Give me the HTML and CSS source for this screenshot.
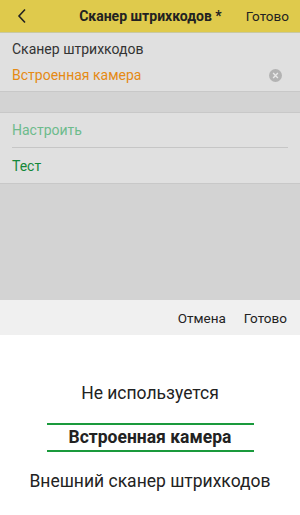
FILE: index.html
```html
<!DOCTYPE html>
<html lang="ru">
<head>
<meta charset="utf-8">
<link rel="stylesheet" href="styles.css">
</head>
<body>
<div class="screen">
  <header class="topbar">
    <span class="back">
      <svg width="10" height="16" viewBox="0 0 10 16"><path d="M8 1.5 L2 8 L8 14.5" fill="none" stroke="#222" stroke-width="1.6"/></svg>
    </span>
    <span class="title">Сканер штрихкодов *</span>
    <span class="done">Готово</span>
  </header>
  <section class="group first">
    <div class="label">Сканер штрихкодов</div>
    <div class="value-row">
      <span class="value">Встроенная камера</span>
      <span class="clear">
        <svg width="13" height="13" viewBox="0 0 12 12"><circle cx="6" cy="6" r="6" fill="#b3b3b3"/><path d="M3.8 3.8 L8.2 8.2 M8.2 3.8 L3.8 8.2" stroke="#e8e8e8" stroke-width="1.3"/></svg>
      </span>
    </div>
  </section>
  <div class="gap"></div>
  <section class="group second">
    <div class="action muted">Настроить</div>
    <div class="sep"></div>
    <div class="action test">Тест</div>
  </section>
  <div class="fill"></div>
  <div class="toolbar">
    <span>Отмена</span>
    <span>Готово</span>
  </div>
  <div class="picker">
    <div class="opt">Не используется</div>
    <div class="opt"><span class="selected">Встроенная камера</span></div>
    <div class="opt">Внешний сканер штрихкодов</div>
  </div>
</div>
</body>
</html>
```
FILE: styles.css
```css
html, body { margin: 0; padding: 0; }
body { font-family: Roboto, "Noto Sans", sans-serif; background: #fff; }
.screen { width: 300px; height: 515px; display: flex; flex-direction: column; overflow: hidden; }
.topbar { height: 32px; background: #dfca4c; border-bottom: 1px solid #c9c9a0; display: flex; align-items: center; padding: 0 11px 0 17px; box-sizing: content-box; }
.back { width: 10px; display: flex; align-items: center; }
.title { flex: 1; text-align: center; font-weight: bold; font-size: 14px; color: #222; padding-left: 28px; }
.done { font-size: 13.5px; color: #222; }
.group { background: #e0e0e0; border-bottom: 1px solid #c8c8c8; }
.first { padding: 0 12px; height: 58px; }
.label { font-size: 14px; color: #333; padding-top: 8px; line-height: 16px; }
.value-row { display: flex; align-items: center; justify-content: space-between; margin-top: 10px; }
.value { font-size: 14px; color: #e58a14; line-height: 16px; }
.clear { display: flex; margin-right: 6px; }
.gap { height: 20px; background: #d3d3d3; border-bottom: 1px solid #c8c8c8; }
.second { padding: 0 12px; height: 70px; }
.action { font-size: 14px; color: #13883a; line-height: 16px; padding-top: 9px; height: 25px; }
.action.test { padding-top: 10px; height: 24px; }
.action.muted { color: #6dbb8c; }
.sep { height: 1px; background: #c6c6c6; }
.fill { flex: 1; background: #d3d3d3; }
.toolbar { height: 35px; background: #f0f0f0; display: flex; justify-content: flex-end; align-items: center; gap: 18px; padding-right: 13px; font-size: 13.5px; color: #222; }
.picker { height: 180px; background: #fff; display: flex; flex-direction: column; padding-top: 36px; box-sizing: border-box; }
.opt { font-size: 17.5px; color: #222; height: 44px; display: flex; align-items: center; justify-content: center; }
.selected { font-weight: bold; width: 207px; text-align: center; border-top: 2px solid #1a9a3c; border-bottom: 2px solid #1a9a3c; height: 25px; line-height: 25px; }
```
